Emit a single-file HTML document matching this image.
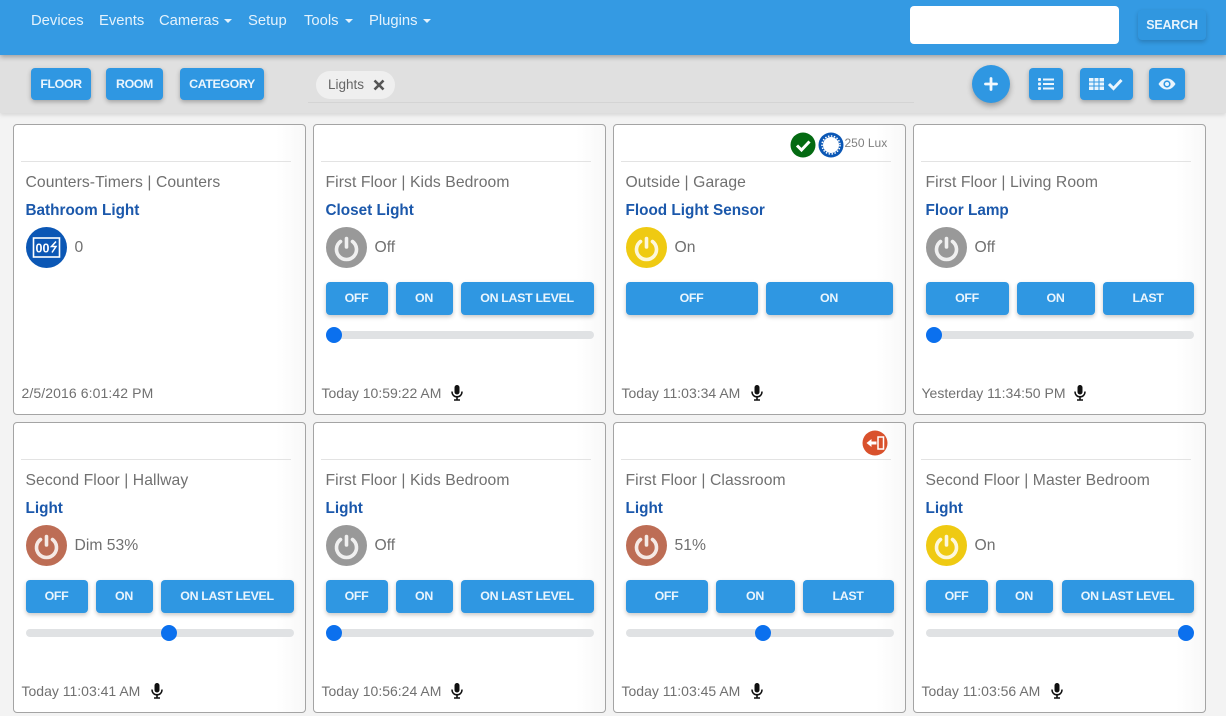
<!DOCTYPE html>
<html><head><meta charset="utf-8"><style>
*{box-sizing:border-box}
html,body{margin:0;padding:0;width:1226px;height:716px;overflow:hidden;background:#f3f3f3;font-family:"Liberation Sans",sans-serif}
#root{position:absolute;left:0;top:0;width:1226px;height:716px;filter:blur(.35px)}
.a{position:absolute}
#nav{left:0;top:0;width:1226px;height:55px;background:#349ae3;box-shadow:0 2px 5px rgba(0,0,0,.3);z-index:3}
.n{position:absolute;top:12px;color:#e4f2fc;font-size:14.8px;line-height:18px;white-space:nowrap}
.car{position:absolute;top:19px;width:0;height:0;border-left:4px solid transparent;border-right:4px solid transparent;border-top:4px solid #e4f2fc}
#bar{left:0;top:55px;width:1226px;height:58px;background:#e0e0e0;box-shadow:0 2px 4px rgba(0,0,0,.12);z-index:2}
.tb{position:absolute;top:68px;height:32px;background:#2f97e2;border-radius:4px;color:#eaf5fd;font-size:12.4px;letter-spacing:-.4px;font-weight:bold;text-align:center;line-height:32px;box-shadow:0 2px 5px rgba(0,0,0,.28);z-index:4}
.card{position:absolute;width:293.5px;height:291.5px;background:linear-gradient(90deg,#fff 90%,#f8f8f8 100%);border:1px solid #a4a4a4;border-radius:4px}
.hr{position:absolute;left:7px;width:270px;top:36px;height:1px;background:#e3e3e3}
.loc{position:absolute;left:12px;top:48px;font-size:15.7px;letter-spacing:.08px;line-height:20px;color:#707070;white-space:nowrap}
.nm{position:absolute;left:12px;top:76px;font-size:15.3px;line-height:20px;font-weight:bold;color:#1b58ab;white-space:nowrap}
.ic{position:absolute;left:12px;top:102px;width:41px;height:41px}
.st{position:absolute;left:61px;top:113px;font-size:15.7px;line-height:20px;color:#707070;white-space:nowrap}
.b{position:absolute;top:157px;height:33px;background:#2f97e2;border-radius:4px;color:#eaf5fd;font-size:12.4px;letter-spacing:-.33px;font-weight:bold;text-align:center;line-height:33px;white-space:nowrap;box-shadow:0 2px 4px rgba(0,0,0,.22)}
.tr{position:absolute;left:12px;top:206px;width:268px;height:8px;border-radius:4px;background:#e0e2e4}
.th{position:absolute;top:202px;width:16px;height:16px;border-radius:50%;background:#0b70ee}
.ts{position:absolute;left:8px;top:259px;font-size:14px;line-height:18px;color:#707070;white-space:nowrap}
.mic{position:absolute;top:260px;width:12px;height:16px}
</style></head><body>
<svg width="0" height="0" style="position:absolute"><defs>
<g id="pw"><path d="M20.500 11.500v8.500" stroke="#fff" stroke-width="3.600" stroke-linecap="round" fill="none" opacity=".85"/><path d="M14.500 14.500a10 10 0 1 0 12 0" stroke="#fff" stroke-width="3.600" stroke-linecap="round" fill="none" opacity=".85"/></g>
<g id="mc"><rect x="3.500" y="0" width="5" height="9.500" rx="2.500" fill="#111"/><path d="M1 6.500c0 3.400 2.200 5.300 5 5.300s5-1.900 5-5.300" stroke="#111" stroke-width="1.500" fill="none"/><path d="M6 11.500v3M3 15h6" stroke="#111" stroke-width="1.600"/></g>
</defs></svg>
<div id="root">
<div class="a" id="nav">
<span class="n" style="left:31px">Devices</span>
<span class="n" style="left:99px">Events</span>
<span class="n" style="left:159px">Cameras</span><i class="car" style="left:224px"></i>
<span class="n" style="left:248px">Setup</span>
<span class="n" style="left:304px">Tools</span><i class="car" style="left:345px"></i>
<span class="n" style="left:369px">Plugins</span><i class="car" style="left:423px"></i>
<div class="a" style="left:910px;top:6px;width:209px;height:38px;background:#fff;border-radius:4px"></div>
<div class="a" style="left:1138px;top:10px;width:68px;height:30px;background:#3097e0;border-radius:4px;color:#e8f4fc;font-size:12.500px;letter-spacing:-.2px;font-weight:bold;text-align:center;line-height:30px;box-shadow:0 2px 5px rgba(0,0,0,.2)">SEARCH</div>
</div>
<div class="a" id="bar"></div>
<div class="tb" style="left:31px;width:60px">FLOOR</div>
<div class="tb" style="left:106px;width:57px">ROOM</div>
<div class="tb" style="left:180px;width:84px">CATEGORY</div>
<div class="a" style="left:316px;top:71px;width:79px;height:28px;border-radius:14px;background:#efefef;z-index:4;color:#666;font-size:13.500px;line-height:28px;padding-left:12px">Lights<svg class="a" style="left:57px;top:8px" width="12" height="12"><path d="M1.500 1.500l9 9M10.500 1.500l-9 9" stroke="#555" stroke-width="2.600"/></svg></div>
<div class="a" style="left:308px;top:102px;width:606px;height:1px;background:#d4d4d4;z-index:4"></div>
<div class="a" style="left:972px;top:65px;width:38px;height:38px;border-radius:50%;background:#2f97e2;box-shadow:0 3px 6px rgba(0,0,0,.3);z-index:4"><svg class="a" style="left:12px;top:12px" width="14" height="14"><path d="M7 1.500v11M1.500 7h11" stroke="#f2f9fe" stroke-width="2.800" stroke-linecap="round"/></svg></div>
<div class="tb" style="left:1029px;width:34px"><svg class="a" style="left:9px;top:9px" width="16" height="14" fill="#eaf5fd"><rect x="0" y="1" width="3" height="3" rx="1"/><rect x="0" y="5.500" width="3" height="3" rx="1"/><rect x="0" y="10" width="3" height="3" rx="1"/><rect x="5" y="1.500" width="11" height="2"/><rect x="5" y="6" width="11" height="2"/><rect x="5" y="10.500" width="11" height="2"/></svg></div>
<div class="tb" style="left:1080px;width:53px"><svg class="a" style="left:9px;top:9px" width="36" height="14"><path d="M0 1h15v12H0z" fill="#eaf5fd"/><path d="M5 1v12M10 1v12M0 5h15M0 9h15" stroke="#2f97e2" stroke-width="1"/><path d="M20 7l4.500 4.500 8-8.500" stroke="#eaf5fd" stroke-width="3" fill="none"/></svg></div>
<div class="tb" style="left:1149px;width:36px"><svg class="a" style="left:9px;top:10px" width="18" height="12"><path d="M0.500 6C3 2 6 .5 9 .5S15 2 17.500 6C15 10 12 11.500 9 11.500S3 10 .5 6z" fill="#eaf5fd"/><circle cx="9" cy="6" r="3.600" fill="#2f97e2"/><circle cx="9" cy="6" r="2" fill="#eaf5fd"/></svg></div>

<!-- card 1 -->
<div class="card" style="left:12.500px;top:123.500px"><div class="hr"></div>
<div class="loc">Counters-Timers | Counters</div><div class="nm">Bathroom Light</div>
<svg class="ic" viewBox="0 0 41 41"><circle cx="20.500" cy="20.500" r="20.500" fill="#0b57b5"/><rect x="7.500" y="11" width="26" height="19" fill="none" stroke="#fff" stroke-width="1.600"/><text x="9.500" y="25.500" font-size="12.500" font-weight="bold" fill="#fff" font-family="Liberation Sans, sans-serif">00</text><path d="M30 14.500l-4.500 5h4.500l-4 6" stroke="#fff" stroke-width="1.500" fill="none"/></svg>
<div class="st">0</div>
<div class="ts" style="letter-spacing:.1px">2/5/2016 6:01:42 PM</div></div>

<!-- card 2 -->
<div class="card" style="left:312.500px;top:123.500px"><div class="hr"></div>
<div class="loc">First Floor | Kids Bedroom</div><div class="nm">Closet Light</div>
<svg class="ic" viewBox="0 0 41 41"><circle cx="20.500" cy="20.500" r="20.500" fill="#999"/><use href="#pw"/></svg>
<div class="st">Off</div>
<div class="b" style="left:12px;width:62px">OFF</div><div class="b" style="left:82px;width:57px">ON</div><div class="b" style="left:147px;width:133px">ON LAST LEVEL</div>
<div class="tr"></div><div class="th" style="left:12px"></div>
<div class="ts">Today 10:59:22 AM</div><svg class="mic" style="left:137px" viewBox="0 0 12 16"><use href="#mc"/></svg></div>

<!-- card 3 -->
<div class="card" style="left:612.500px;top:123.500px"><div class="hr"></div>
<svg class="a" style="left:176px;top:7px" width="26" height="26"><circle cx="13" cy="13" r="12.500" fill="#046a12"/><path d="M7 13.500l4.500 4.500 8-8.500" stroke="#fff" stroke-width="3" fill="none"/></svg>
<svg class="a" style="left:204px;top:7px" width="26" height="26"><circle cx="13" cy="13" r="12.500" fill="#0b57b5"/><circle cx="13" cy="13" r="8" fill="#fff"/><circle cx="13" cy="13" r="9" fill="none" stroke="#fff" stroke-width="1.500" stroke-dasharray="1.500 1.500"/></svg>
<div class="a" style="left:231px;top:10px;font-size:12px;line-height:16px;color:#808080">250 Lux</div>
<div class="loc">Outside | Garage</div><div class="nm">Flood Light Sensor</div>
<svg class="ic" viewBox="0 0 41 41"><circle cx="20.500" cy="20.500" r="20.500" fill="#efca12"/><use href="#pw"/></svg>
<div class="st">On</div>
<div class="b" style="left:12px;width:132px">OFF</div><div class="b" style="left:152px;width:127px">ON</div>
<div class="ts">Today 11:03:34 AM</div><svg class="mic" style="left:137px" viewBox="0 0 12 16"><use href="#mc"/></svg></div>

<!-- card 4 -->
<div class="card" style="left:912.500px;top:123.500px"><div class="hr"></div>
<div class="loc">First Floor | Living Room</div><div class="nm">Floor Lamp</div>
<svg class="ic" viewBox="0 0 41 41"><circle cx="20.500" cy="20.500" r="20.500" fill="#999"/><use href="#pw"/></svg>
<div class="st">Off</div>
<div class="b" style="left:12px;width:83px">OFF</div><div class="b" style="left:103px;width:78px">ON</div><div class="b" style="left:189px;width:91px">LAST</div>
<div class="tr"></div><div class="th" style="left:12px"></div>
<div class="ts">Yesterday 11:34:50 PM</div><svg class="mic" style="left:160px" viewBox="0 0 12 16"><use href="#mc"/></svg></div>

<!-- card 5 -->
<div class="card" style="left:12.500px;top:421.500px"><div class="hr"></div>
<div class="loc">Second Floor | Hallway</div><div class="nm">Light</div>
<svg class="ic" viewBox="0 0 41 41"><circle cx="20.500" cy="20.500" r="20.500" fill="#bd6d55"/><use href="#pw"/></svg>
<div class="st">Dim 53%</div>
<div class="b" style="left:12px;width:62px">OFF</div><div class="b" style="left:82px;width:57px">ON</div><div class="b" style="left:147px;width:133px">ON LAST LEVEL</div>
<div class="tr"></div><div class="th" style="left:147px"></div>
<div class="ts">Today 11:03:41 AM</div><svg class="mic" style="left:137px" viewBox="0 0 12 16"><use href="#mc"/></svg></div>

<!-- card 6 -->
<div class="card" style="left:312.500px;top:421.500px"><div class="hr"></div>
<div class="loc">First Floor | Kids Bedroom</div><div class="nm">Light</div>
<svg class="ic" viewBox="0 0 41 41"><circle cx="20.500" cy="20.500" r="20.500" fill="#999"/><use href="#pw"/></svg>
<div class="st">Off</div>
<div class="b" style="left:12px;width:62px">OFF</div><div class="b" style="left:82px;width:57px">ON</div><div class="b" style="left:147px;width:133px">ON LAST LEVEL</div>
<div class="tr"></div><div class="th" style="left:12px"></div>
<div class="ts">Today 10:56:24 AM</div><svg class="mic" style="left:137px" viewBox="0 0 12 16"><use href="#mc"/></svg></div>

<!-- card 7 -->
<div class="card" style="left:612.500px;top:421.500px"><div class="hr"></div>
<svg class="a" style="left:248px;top:7px" width="26" height="26"><circle cx="13" cy="13" r="12.500" fill="#d9512c"/><path d="M4.500 13l5-4v2.500h5v3h-5V17z" fill="#fff"/><rect x="16" y="7" width="5.500" height="12" fill="none" stroke="#fff" stroke-width="1.500"/></svg>
<div class="loc">First Floor | Classroom</div><div class="nm">Light</div>
<svg class="ic" viewBox="0 0 41 41"><circle cx="20.500" cy="20.500" r="20.500" fill="#bd6d55"/><use href="#pw"/></svg>
<div class="st">51%</div>
<div class="b" style="left:12px;width:82px">OFF</div><div class="b" style="left:102px;width:79px">ON</div><div class="b" style="left:189px;width:91px">LAST</div>
<div class="tr"></div><div class="th" style="left:141px"></div>
<div class="ts">Today 11:03:45 AM</div><svg class="mic" style="left:137px" viewBox="0 0 12 16"><use href="#mc"/></svg></div>

<!-- card 8 -->
<div class="card" style="left:912.500px;top:421.500px"><div class="hr"></div>
<div class="loc">Second Floor | Master Bedroom</div><div class="nm">Light</div>
<svg class="ic" viewBox="0 0 41 41"><circle cx="20.500" cy="20.500" r="20.500" fill="#efca12"/><use href="#pw"/></svg>
<div class="st">On</div>
<div class="b" style="left:12px;width:62px">OFF</div><div class="b" style="left:82px;width:57px">ON</div><div class="b" style="left:148px;width:132px">ON LAST LEVEL</div>
<div class="tr"></div><div class="th" style="left:264px"></div>
<div class="ts">Today 11:03:56 AM</div><svg class="mic" style="left:137px" viewBox="0 0 12 16"><use href="#mc"/></svg></div>
</div>
</body></html>
